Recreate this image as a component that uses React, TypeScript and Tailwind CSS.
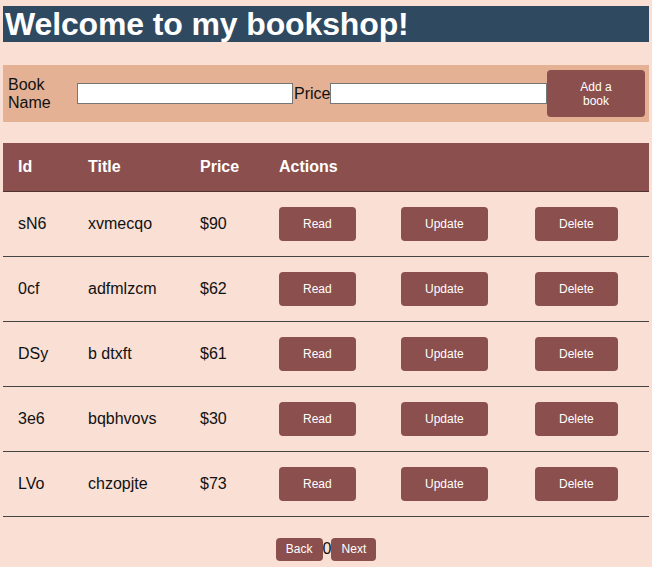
import React from 'react'

type Book = { id: string; title: string; price: number }

const books: Book[] = [
  { id: 'sN6', title: 'xvmecqo', price: 90 },
  { id: '0cf', title: 'adfmlzcm', price: 62 },
  { id: 'DSy', title: 'b dtxft', price: 61 },
  { id: '3e6', title: 'bqbhvovs', price: 30 },
  { id: 'LVo', title: 'chzopjte', price: 73 },
]

function ActionButton({ label }: { label: string }) {
  return (
    <button className="h-[34px] rounded-[4px] bg-[#8b4f4d] px-6 text-[12px] text-white">
      {label}
    </button>
  )
}

export default function App() {
  return (
    <div className="min-h-screen bg-[#f9dfd4] px-[3px] pt-[6px] font-['Liberation_Sans',Arial,sans-serif] text-[#111]">
      <h1 className="bg-[#2f4960] px-[2px] text-[32px] font-bold leading-[36px] tracking-[-0.13px] text-white">
        Welcome to my bookshop!
      </h1>

      <form
        className="mt-[23px] flex h-[57px] items-center bg-[#e4b195] pl-[5px] pr-[4px] text-[16px]"
        onSubmit={(e) => e.preventDefault()}
      >
        <label htmlFor="name" className="w-[69px] leading-[18px]">
          Book Name
        </label>
        <input
          id="name"
          className="h-[21px] w-[216px] border border-[#767676] bg-white"
        />
        <label htmlFor="price" className="ml-px w-[36px]">
          Price
        </label>
        <input
          id="price"
          className="h-[21px] w-[217px] border border-[#767676] bg-white"
        />
        <button
          type="submit"
          className="h-[47px] w-[98px] rounded-[4px] bg-[#8b4f4d] px-6 text-[12px] leading-[14px] text-white"
        >
          Add a book
        </button>
      </form>

      <table className="mt-[21px] w-full border-collapse text-left text-[16px]">
        <thead>
          <tr className="border-b border-[#4d3433] bg-[#8b4f4d] text-white">
            <th className="w-[70px] px-[15px] py-[15px] leading-[18px]">Id</th>
            <th className="w-[112px] px-[15px] py-[15px] leading-[18px]">Title</th>
            <th className="w-[79px] px-[15px] py-[15px] leading-[18px]">Price</th>
            <th colSpan={3} className="px-[15px] py-[15px] leading-[18px]">
              Actions
            </th>
          </tr>
        </thead>
        <tbody>
          {books.map((b) => (
            <tr key={b.id} className="border-b border-[#444]">
              <td className="px-[15px] py-[15px]">{b.id}</td>
              <td className="px-[15px] py-[15px]">{b.title}</td>
              <td className="px-[15px] py-[15px]">${b.price}</td>
              <td className="w-[122px] px-[15px] py-[15px]">
                <ActionButton label="Read" />
              </td>
              <td className="w-[134px] px-[15px] py-[15px]">
                <ActionButton label="Update" />
              </td>
              <td className="px-[15px] py-[15px]">
                <ActionButton label="Delete" />
              </td>
            </tr>
          ))}
        </tbody>
      </table>

      <div className="mt-[20px] flex items-center justify-center text-[16px]">
        <button className="h-[23px] w-[47px] rounded-[4px] bg-[#8b4f4d] text-[12px] text-white">
          Back
        </button>
        <span>0</span>
        <button className="h-[23px] w-[45px] rounded-[4px] bg-[#8b4f4d] text-[12px] text-white">
          Next
        </button>
      </div>
    </div>
  )
}
